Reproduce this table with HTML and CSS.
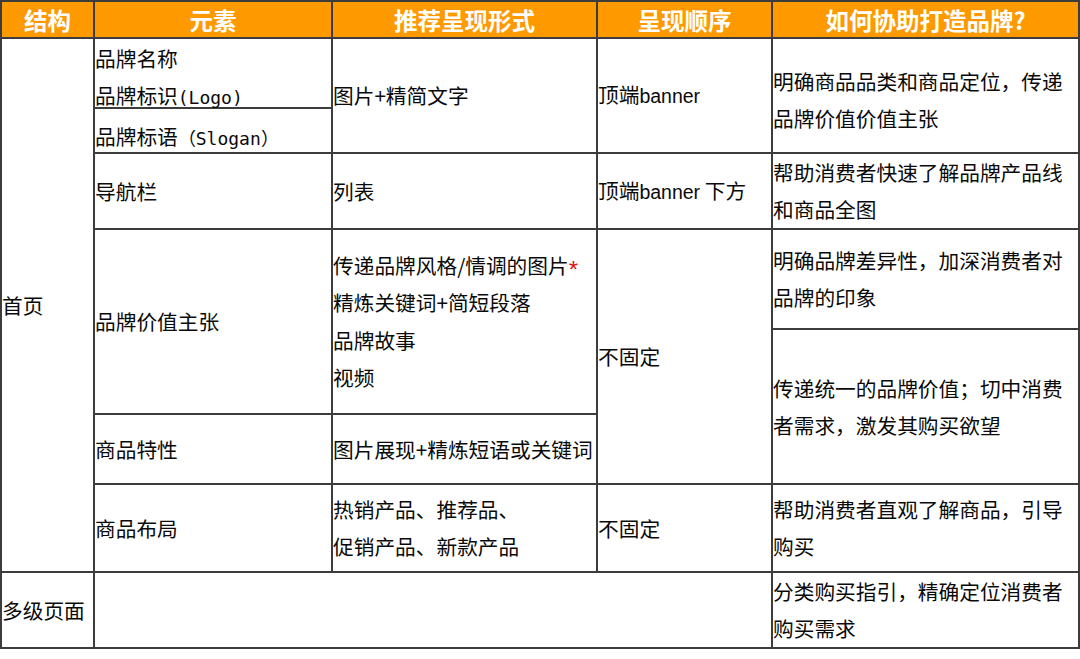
FILE: index.html
```html
<!DOCTYPE html>
<html lang="zh-CN">
<head>
<meta charset="utf-8">
<link rel="stylesheet" href="styles.css">
</head>
<body>
<table class="grid">
  <colgroup>
    <col class="c1"><col class="c2"><col class="c3"><col class="c4"><col class="c5">
  </colgroup>
  <thead>
    <tr class="r-head">
      <th>结构</th><th>元素</th><th>推荐呈现形式</th><th>呈现顺序</th><th>如何协助打造品牌?</th>
    </tr>
  </thead>
  <tbody>
    <tr class="r-a">
      <td rowspan="7">首页</td>
      <td class="top"><div class="stack">品牌名称<br>品牌标识<span class="mono">(Logo)</span></div></td>
      <td rowspan="2">图片+精简文字</td>
      <td rowspan="2"><span>顶端</span><span class="latin">banner</span></td>
      <td rowspan="2" class="tight shift">明确商品品类和商品定位，传递<br>品牌价值价值主张</td>
    </tr>
    <tr class="r-b">
      <td class="bottom">品牌标语<span class="mono">（Slogan）</span></td>
    </tr>
    <tr class="r-c">
      <td>导航栏</td>
      <td>列表</td>
      <td><span>顶端</span><span class="latin">banner</span> 下方</td>
      <td class="tight">帮助消费者快速了解品牌产品线<br>和商品全图</td>
    </tr>
    <tr class="r-d">
      <td rowspan="2">品牌价值主张</td>
      <td rowspan="2" class="lines">传递品牌风格/情调的图片<span class="star">*</span><br>精炼关键词+简短段落<br>品牌故事<br>视频</td>
      <td rowspan="3">不固定</td>
      <td class="tight">明确品牌差异性，加深消费者对<br>品牌的印象</td>
    </tr>
    <tr class="r-e">
      <td rowspan="2" class="tight">传递统一的品牌价值；切中消费<br>者需求，激发其购买欲望</td>
    </tr>
    <tr class="r-f">
      <td>商品特性</td>
      <td>图片展现+精炼短语或关键词</td>
    </tr>
    <tr class="r-g">
      <td>商品布局</td>
      <td class="tight">热销产品、推荐品、<br>促销产品、新款产品</td>
      <td>不固定</td>
      <td class="tight">帮助消费者直观了解商品，引导<br>购买</td>
    </tr>
    <tr class="r-h">
      <td>多级页面</td>
      <td colspan="3"></td>
      <td class="tight">分类购买指引，精确定位消费者<br>购买需求</td>
    </tr>
  </tbody>
</table>
</body>
</html>
```

FILE: styles.css
```css
html, body {
  margin: 0;
  padding: 0;
  background: #ffffff;
}

.grid {
  border-collapse: collapse;
  table-layout: fixed;
  width: 1078px;
  margin-left: 0;
  font-family: "Noto Sans CJK SC", "Noto Sans", sans-serif;
  font-size: 20.7px;
  color: #0a0a0a;
}

.c1 { width: 93px; }
.c2 { width: 238px; }
.c3 { width: 265px; }
.c4 { width: 175px; }
.c5 { width: 307px; }

.grid th,
.grid td {
  border: 2px solid #3c3c3c;
  padding: 0;
  vertical-align: middle;
  text-align: left;
  line-height: 37px;
  white-space: nowrap;
  overflow: visible;
}

.grid th {
  background: #ff9900;
  color: #ffffff;
  font-weight: 700;
  font-size: 23.5px;
  text-align: center;
  line-height: 34px;
  padding: 0;
}

.r-head { height: 37px; }
.r-a { height: 70px; }
.r-b { height: 45px; }
.r-c { height: 74px; }
.r-d { height: 100px; }
.r-e { height: 85px; }
.r-f { height: 70px; }
.r-g { height: 88px; }
.r-h { height: 75px; }

.grid td.top {
  vertical-align: top;
}

.stack {
  height: 66px;
  padding-top: 1px;
  line-height: 37px;
}

.grid td.bottom {
  vertical-align: bottom;
  line-height: 26px;
  padding-bottom: 0;
}

.grid td.tight {
  line-height: 37px;
}

.grid td.shift {
  padding-top: 8px;
}

.grid td.lines {
  line-height: 37.5px;
}

.mono {
  font-family: "DejaVu Sans Mono", "Liberation Mono", monospace;
  font-size: 18px;
}

.latin {
  font-family: "Liberation Sans", Arial, sans-serif;
  font-size: 19.5px;
}

.star {
  color: #e01010;
  font-family: "Liberation Sans", Arial, sans-serif;
  font-size: 24px;
  vertical-align: -4px;
  line-height: 0;
}
```
